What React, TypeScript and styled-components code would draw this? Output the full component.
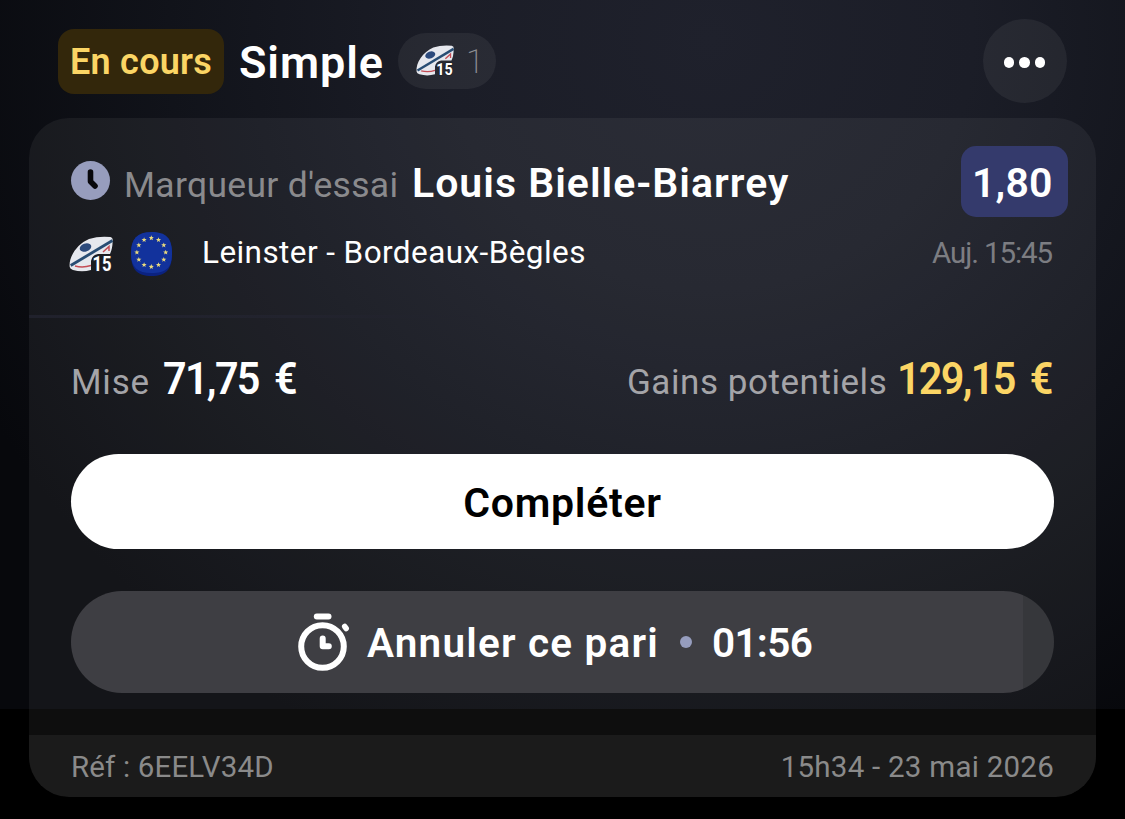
import React from 'react';
import styled, { createGlobalStyle } from 'styled-components';

const GlobalStyle = createGlobalStyle`
  * { box-sizing: border-box; }
  body { margin: 0; background: #000; font-family: Roboto, 'Liberation Sans', sans-serif; }
  button { font-family: inherit; border: 0; padding: 0; }
  svg { display: block; flex: none; overflow: visible; }
`;

const Page = styled.main`
  width: 1125px;
  height: 819px;
  padding: 19px 29px 0;
  overflow: hidden;
  background:
    radial-gradient(ellipse 820px 780px at 710px 40px, #1f212c 0%, #1b1d27 32%, #11131a 66%, #07080c 100%) 0 0 / 1125px 709px no-repeat,
    #000;
`;

const Header = styled.header`
  display: flex;
  align-items: center;
  height: 84px;
  padding: 0 29px;
`;

const StatusBadge = styled.span`
  width: 166px;
  height: 65px;
  padding-left: 12px;
  border-radius: 16px;
  background: #33270b;
  color: #fbd565;
  font-size: 36px;
  font-weight: 600;
  line-height: 66px;
  letter-spacing: 0.25px;
  white-space: nowrap;
`;

const Title = styled.h1`
  margin: 0 0 0 15px;
  padding-top: 3px;
  width: 159px;
  color: #fff;
  font-size: 45px;
  font-weight: 600;
  line-height: 45px;
  letter-spacing: 0.9px;
`;

const SportChip = styled.span`
  display: flex;
  align-items: center;
  gap: 12px;
  width: 98px;
  height: 56px;
  padding-left: 18px;
  border-radius: 28px;
  background: rgba(255, 255, 255, 0.06);
  color: #8d8e93;
  font-size: 33px;
  font-weight: 200;
`;

const MenuButton = styled.button`
  display: flex;
  align-items: center;
  justify-content: center;
  gap: 5px;
  width: 84px;
  height: 84px;
  margin-left: auto;
  padding: 3px 1px 0 0;
  border-radius: 50%;
  background: rgba(255, 255, 255, 0.06);
`;

const MenuDot = styled.i`
  width: 10.6px;
  height: 10.6px;
  border-radius: 50%;
  background: #fff;
`;

const Card = styled.section`
  display: flex;
  flex-direction: column;
  height: 679px;
  margin-top: 15px;
  border-radius: 40px;
  overflow: hidden;
  background: rgba(255, 255, 255, 0.053);
`;

const Selection = styled.div`
  height: 197px;
  padding: 28px 28px 0 42px;
`;

const MarketRow = styled.div`
  display: flex;
  align-items: center;
  height: 71px;
`;

const MarketText = styled.div`
  display: flex;
  align-items: baseline;
  gap: 13px;
  margin-left: 13px;
  padding-top: 4px;
  white-space: nowrap;
  line-height: 1;
`;

const Market = styled.span`
  width: 275px;
  color: #8a8a8d;
  font-size: 35.5px;
  font-weight: 400;
  letter-spacing: 0.3px;
`;

const Player = styled.strong`
  color: #fff;
  font-size: 41px;
  font-weight: 600;
  letter-spacing: 1px;
`;

const Odds = styled.span`
  width: 107px;
  height: 71px;
  margin-left: auto;
  padding: 1px 0 0 11px;
  border-radius: 15px;
  background: #343a6c;
  color: #fff;
  font-size: 41px;
  font-weight: 600;
  line-height: 72px;
  letter-spacing: 0.2px;
`;

const EventRow = styled.div`
  display: flex;
  align-items: center;
  height: 44px;
  margin-top: 15px;
  padding-right: 16px;
`;

const SportSlot = styled.span`
  width: 62px;
  margin-left: -2px;
`;

const Teams = styled.span`
  margin: -4px 0 0 29px;
  color: #fff;
  font-size: 31.5px;
  font-weight: 400;
  letter-spacing: 0.42px;
  white-space: nowrap;
`;

const Kickoff = styled.time`
  margin: -2px 0 0 auto;
  color: #7c7d82;
  font-size: 29.5px;
  font-weight: 400;
  letter-spacing: -1.1px;
  white-space: nowrap;
`;

const Divider = styled.hr`
  width: 100%;
  height: 3px;
  margin: 0;
  border: 0;
  background: linear-gradient(90deg, #20212c, #22232e 25%, rgba(34, 35, 46, 0) 45%);
`;

const Amounts = styled.div`
  display: flex;
  justify-content: space-between;
  height: 136px;
  padding: 39px 42px 0;
`;

const Amount = styled.div`
  display: flex;
  align-items: baseline;
  gap: 13px;
  line-height: 1;
  white-space: nowrap;
`;

const AmountLabel = styled.span<{ $spacing: number }>`
  color: #a4a4a8;
  font-size: 35px;
  font-weight: 400;
  letter-spacing: ${({ $spacing }) => $spacing}px;
`;

const AmountValue = styled.strong<{ $gain?: boolean }>`
  margin: ${({ $gain }) => ($gain ? '0 2px 0 -13px' : '0')};
  color: ${({ $gain }) => ($gain ? '#fbd565' : '#fff')};
  font-size: 44px;
  font-weight: 600;
  letter-spacing: -1.8px;
  word-spacing: 7px;
  transform: scaleX(0.94);
  transform-origin: ${({ $gain }) => ($gain ? 'right' : 'left')};
`;

const Actions = styled.div`
  display: grid;
  gap: 42px;
  padding: 0 42px;
`;

const CompleteButton = styled.button`
  height: 95px;
  padding-top: 3px;
  border-radius: 48px;
  background: #fff;
  color: #000;
  font-size: 41px;
  font-weight: 600;
  letter-spacing: 0.7px;
`;

const CancelButton = styled.button`
  display: flex;
  align-items: center;
  height: 102px;
  padding-left: 227px;
  border-radius: 51px;
  background: linear-gradient(90deg, #3e3e43 952px, #36373b 952px);
  color: #fff;
  font-size: 40.5px;
  font-weight: 600;
  white-space: nowrap;
`;

const CancelLabel = styled.span`
  flex: none;
  width: 314px;
  margin-left: 17px;
  padding-top: 2px;
  text-align: left;
  letter-spacing: 1.2px;
`;

const Separator = styled.i`
  flex: none;
  width: 12px;
  height: 12px;
  margin-left: -1px;
  border-radius: 50%;
  background: #969dbe;
`;

const Countdown = styled.span`
  margin-left: 20px;
  padding-top: 2px;
  letter-spacing: -0.7px;
`;

const Footer = styled.footer`
  display: flex;
  align-items: center;
  justify-content: space-between;
  height: 62px;
  margin-top: auto;
  padding: 2px 42px 0;
  background: rgba(255, 255, 255, 0.055);
  color: #8a8a8a;
  font-size: 29.5px;
  font-weight: 400;
`;

const Reference = styled.span`
  letter-spacing: 0.15px;
`;

const PlacedAt = styled.time`
  letter-spacing: 0.25px;
`;

function RugbyIcon({ width }: { width: number }) {
  return (
    <svg width={width} height={(width * 37) / 44} viewBox="0 0 44 37">
      <path d="M.7 31C-.5 21 8 8 20 3Q30 -.2 41.500 1Q44 1.500 43.700 4.500Q43.500 13 41 18H29Q23 19 22 25V34Q13 36.500 4 34Q1 33.200.7 31Z" fill="#e6e8ee" />
      <path d="M1.700 29.500L43.500 4.500" stroke="#284d74" strokeWidth="2.800" />
      <ellipse cx="16.500" cy="11.500" rx="6" ry="4" transform="rotate(-20 16.500 11.500)" fill="#2c4a7c" />
      <path d="M6 30Q14 32 22 29.500M34 16L40 10.500V15" fill="none" stroke="#c44c55" strokeWidth="1.500" />
      <text x="23.500" y="35" fill="#fff" fontFamily="Roboto" fontSize="19.500" fontWeight="700" textLength="19" lengthAdjust="spacingAndGlyphs" stroke="#20222a" strokeWidth="2" paintOrder="stroke">15</text>
    </svg>
  );
}

const starPoints = Array.from({ length: 10 }, (_, i) => {
  const radius = i % 2 ? 1.15 : 2.7;
  const angle = (i * Math.PI) / 5 - Math.PI / 2;
  return `${(radius * Math.cos(angle)).toFixed(2)},${(radius * Math.sin(angle)).toFixed(2)}`;
}).join(' ');

function EuropeIcon() {
  return (
    <svg width="42" height="44" viewBox="0 0 42 44">
      <path d="M20.500 1C35 1 41 7 41 22S35 44 20.500 44S0 37 0 22S6 1 20.500 1Z" fill="#0b2280" />
      <path d="M20.500 0C35 0 41 6 41 21S35 41 20.500 41S0 35 0 21S6 0 20.500 0Z" fill="#12329c" />
      {Array.from({ length: 12 }, (_, i) => {
        const angle = (i * Math.PI) / 6;
        return (
          <polygon
            key={i}
            points={starPoints}
            fill="#eadb7d"
            transform={`translate(${20.3 + 14.4 * Math.sin(angle)} ${20.4 - 14.4 * Math.cos(angle)})`}
          />
        );
      })}
    </svg>
  );
}

const ClockGlyph = styled.svg`
  margin-top: -2px;
`;

function ClockIcon() {
  return (
    <ClockGlyph width="40" height="40" viewBox="0 0 40 40">
      <circle cx="19.500" cy="19.500" r="19.500" fill="#979dbd" />
      <path d="M19.500 11V20.500L24 25" fill="none" stroke="#08080c" strokeWidth="5.600" strokeLinecap="round" strokeLinejoin="round" />
    </ClockGlyph>
  );
}

function StopwatchIcon() {
  return (
    <svg width="52" height="60" viewBox="0 0 52 60" fill="none" stroke="#fff" strokeLinecap="round">
      <circle cx="24.500" cy="34.500" r="21.300" strokeWidth="6" />
      <path d="M18.800 4.500H30.500" strokeWidth="6" />
      <path d="M46.700 14.500L48.200 16.500" strokeWidth="5.500" />
      <path d="M24.700 26.500V34.200H30.800" strokeWidth="6" strokeLinejoin="round" />
    </svg>
  );
}

export default function App() {
  return (
    <>
      <GlobalStyle />
      <Page>
        <Header>
          <StatusBadge>En cours</StatusBadge>
          <Title>Simple</Title>
          <SportChip>
            <RugbyIcon width={38} />
            <span>1</span>
          </SportChip>
          <MenuButton aria-label="Options">
            <MenuDot />
            <MenuDot />
            <MenuDot />
          </MenuButton>
        </Header>
        <Card>
          <Selection>
            <MarketRow>
              <ClockIcon />
              <MarketText>
                <Market>Marqueur d'essai</Market>
                <Player>Louis Bielle-Biarrey</Player>
              </MarketText>
              <Odds>1,80</Odds>
            </MarketRow>
            <EventRow>
              <SportSlot>
                <RugbyIcon width={44} />
              </SportSlot>
              <EuropeIcon />
              <Teams>Leinster - Bordeaux-Bègles</Teams>
              <Kickoff>Auj. 15:45</Kickoff>
            </EventRow>
          </Selection>
          <Divider />
          <Amounts>
            <Amount>
              <AmountLabel $spacing={0.8}>Mise</AmountLabel>
              <AmountValue>71,75 €</AmountValue>
            </Amount>
            <Amount>
              <AmountLabel $spacing={0.55}>Gains potentiels</AmountLabel>
              <AmountValue $gain>129,15 €</AmountValue>
            </Amount>
          </Amounts>
          <Actions>
            <CompleteButton>Compléter</CompleteButton>
            <CancelButton>
              <StopwatchIcon />
              <CancelLabel>Annuler ce pari</CancelLabel>
              <Separator />
              <Countdown>01:56</Countdown>
            </CancelButton>
          </Actions>
          <Footer>
            <Reference>Réf : 6EELV34D</Reference>
            <PlacedAt>15h34 - 23 mai 2026</PlacedAt>
          </Footer>
        </Card>
      </Page>
    </>
  );
}
